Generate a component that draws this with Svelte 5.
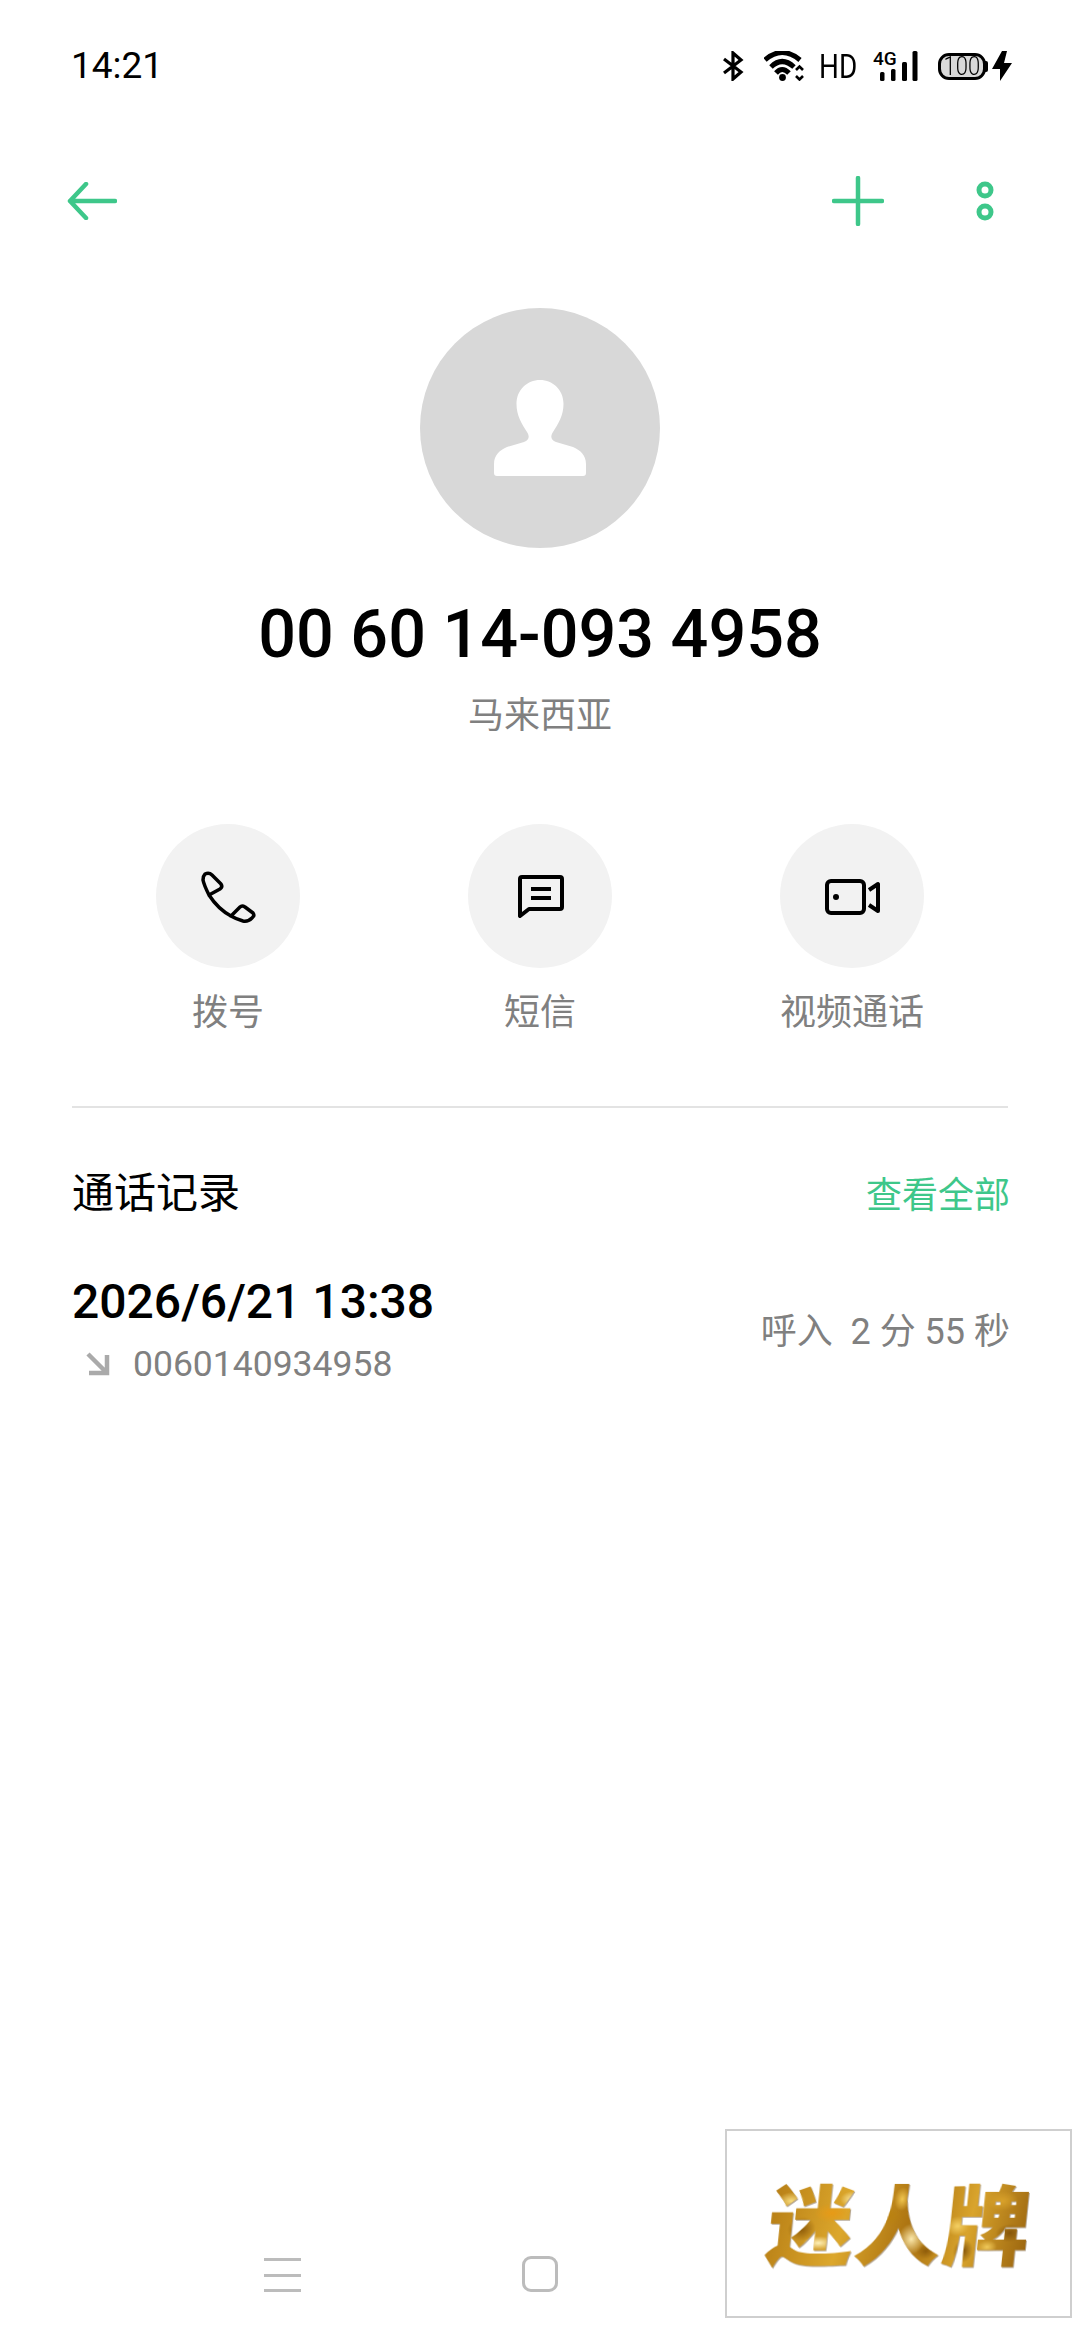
<script>
  const actions = [
    { label: '拨号', kind: 'phone' },
    { label: '短信', kind: 'msg' },
    { label: '视频通话', kind: 'video' }
  ];
</script>

<div class="page">
  <header class="status">
    <span class="time">14:21</span>
    <div class="status-icons">
      <svg class="bt" viewBox="0 0 24 30" width="24" height="30"><path d="M3 8 L20 21 L12 28 V2 L20 9 L3 22" /></svg>
      <svg class="wifi" viewBox="0 0 42 30" width="42" height="30">
        <path d="M1 9 Q18 -6 36 9" /><path d="M7 16 Q18 5 30 16" /><path d="M12 22 Q18 15 25 22" />
        <circle cx="18.5" cy="26.5" r="3.4" />
        <path class="thin" d="M32 19 L35.500 15.500 L39 19 M32 25 L35.500 28.500 L39 25" />
      </svg>
      <span class="hd">HD</span>
      <svg class="signal" viewBox="0 -6 46 36" width="46" height="36">
        <text x="0" y="14" class="g4">4G</text>
        <rect x="7" y="21" width="4.5" height="9" rx="1.5" />
        <rect x="18" y="18" width="4.5" height="12" rx="1.5" />
        <rect x="29" y="11" width="5" height="19" rx="1.5" />
        <rect x="39.500" y="0" width="5" height="30" rx="1.5" />
      </svg>
      <div class="battery"><span>100</span></div>
      <svg class="bolt" viewBox="0 0 20 30" width="20" height="30"><path d="M10 0 L0 18 H8 L8 30 L20 12 H12 L15 0 Z" /></svg>
    </div>
  </header>

  <nav class="toolbar">
    <svg viewBox="0 0 50 38" width="50" height="38"><path d="M3 19 H48 M19 2 L3 19 L19 36" /></svg>
    <div class="tools">
      <svg viewBox="0 0 52 50" width="52" height="50"><path d="M2 25 H50 M26 2 V48" /></svg>
      <svg viewBox="0 0 18 42" width="18" height="42">
        <circle cx="9" cy="10" r="6" /><circle cx="9" cy="32" r="6" />
      </svg>
    </div>
  </nav>

  <section class="hero">
    <div class="avatar">
      <svg viewBox="0 0 240 240" width="240" height="240">
        <path d="M120 72 C133 72 143.500 82 143.500 96 C143.500 108 138 116 133 124 C130 129 131 132 136 134 L153 139 C160 142 166 147 166 156 V165 Q166 168 163 168 H77 Q74 168 74 165 V156 C74 147 80 142 87 139 L104 134 C109 132 110 129 107 124 C102 116 96.500 108 96.500 96 C96.500 82 107 72 120 72 Z" />
      </svg>
    </div>
    <h1>00 60 14-093 4958</h1>
    <p>马来西亚</p>
  </section>

  <section class="actions">
    {#each actions as a}
      <div class="action">
        <div class="circle">
          {#if a.kind === 'phone'}
            <svg viewBox="0 0 80 70" width="80" height="70" class="phone">
              <path d="M15 13 Q19 11 22 14 L31 23 Q33 26 30 28 L19 34 Q14 24 13 19 Q13 15 15 13 Z" />
              <path d="M19 34 Q28 48 41 55" />
              <path d="M41 55 L50 46 Q52 44 55 46 L63 52 Q65 55 62 57 Q58 61 53 60 Q46 58 41 55 Z" />
            </svg>
          {:else if a.kind === 'msg'}
            <svg viewBox="0 0 70 70" width="70" height="70" class="bold msg">
              <path d="M14 55 V18 Q14 16 16 16 H54 Q56 16 56 18 V46 Q56 48 54 48 H23 Z" />
              <path d="M25 28 H45 M25 37 H45" />
            </svg>
          {:else}
            <svg viewBox="0 0 80 60" width="80" height="60" class="bold video">
              <rect x="13" y="15" width="37" height="32" rx="4" />
              <circle class="dot" cx="22" cy="31" r="3" />
              <path d="M55 24 L64 18 V45 L55 39" />
            </svg>
          {/if}
        </div>
        <span>{a.label}</span>
      </div>
    {/each}
  </section>

  <hr />

  <section class="log">
    <div class="log-head">
      <h2>通话记录</h2>
      <span class="all">查看全部</span>
    </div>
    <div class="log-row">
      <div class="log-main">
        <div class="date">2026/6/21 13:38</div>
        <div class="num">
          <svg viewBox="0 0 26 26" width="26" height="26"><path d="M3 3 L22 22 M22 4 V22 H4" /></svg>
          <span>0060140934958</span>
        </div>
      </div>
      <span class="dur">呼入&nbsp; 2 分 55 秒</span>
    </div>
  </section>

  <footer class="navbar">
    <div class="menu"><i></i><i></i><i></i></div>
    <div class="home"></div>
    <div></div>
  </footer>

  <div class="stamp"><span>迷人牌</span></div>
</div>

<style>
  :global(body) { margin: 0; background: #fff; }
  .page {
    position: relative;
    width: 1080px;
    height: 2340px;
    display: flex;
    flex-direction: column;
    overflow: hidden;
    background: #fff;
    font-family: Roboto, "Noto Sans CJK SC", sans-serif;
    color: #000;
  }
  .status {
    height: 130px;
    flex: none;
    box-sizing: border-box;
    padding: 2px 68px 0 71px;
    display: flex;
    align-items: center;
    justify-content: space-between;
  }
  .time { font-size: 37px; line-height: 44px; }
  .status-icons { display: flex; align-items: center; }
  .status-icons svg { display: block; }
  .bt path, .wifi path { fill: none; stroke: #000; stroke-width: 3.2px; }
  .bt { margin-right: -1px; }
  .wifi { margin-left: 20px; }
  .wifi path { stroke-width: 5px; }
  .wifi .thin { stroke-width: 2.600px; }
  .hd {
    display: block;
    width: 37px;
    margin-left: 13px;
    font-size: 34px;
    line-height: 30px;
    transform: scaleX(0.82);
    transform-origin: left center;
    white-space: nowrap;
  }
  .signal { margin: -6px 0 0 17px; }
  .g4 { font: 500 19px Roboto, sans-serif; }
  .battery {
    margin-left: 19px;
    box-sizing: border-box;
    width: 48px;
    height: 27px;
    border: 3px solid #000;
    border-radius: 11px;
    background: #d9d9d9;
    display: flex;
    align-items: center;
    justify-content: center;
    position: relative;
  }
  .battery::after {
    content: "";
    position: absolute;
    right: -5px;
    top: 5px;
    width: 3px;
    height: 11px;
    background: #000;
    border-radius: 0 2px 2px 0;
  }
  .battery span {
    font-size: 25px;
    font-weight: 300;
    line-height: 21px;
    transform: scaleX(0.88);
  }
  .bolt { margin-left: 6px; }

  .toolbar {
    flex: none;
    height: 142px;
    box-sizing: border-box;
    padding: 0 86px 0 67px;
    display: flex;
    align-items: center;
    justify-content: space-between;
  }
  .toolbar svg { display: block; }
  .toolbar path { fill: none; stroke: #3ec78a; stroke-width: 4.500px; stroke-linecap: round; stroke-linejoin: round; }
  .toolbar circle { fill: none; stroke: #3ec78a; stroke-width: 5px; }
  .tools { display: flex; align-items: center; gap: 92px; }

  .hero { flex: none; padding-top: 36px; display: flex; flex-direction: column; align-items: center; }
  .avatar { width: 240px; height: 240px; border-radius: 50%; background: #d8d8d8; }
  .avatar svg { display: block; }
  .avatar path { fill: #fff; }
  h1 { margin: 41px 0 0; font-size: 66.500px; line-height: 90px; font-weight: 500; letter-spacing: 0; }
  .hero p { margin: 12px 0 0; font-size: 36px; line-height: 50px; color: #808080; }

  .actions {
    flex: none;
    margin-top: 83px;
    display: grid;
    grid-template-columns: repeat(3, 312px);
    justify-content: center;
  }
  .action { display: flex; flex-direction: column; align-items: center; }
  .circle {
    width: 144px;
    height: 144px;
    border-radius: 50%;
    background: #f2f2f2;
    display: flex;
    align-items: center;
    justify-content: center;
  }
  .circle svg { display: block; }
  .circle .phone { margin-left: 3px; }
  .circle .msg { margin-left: 1px; }
  .circle .video { margin-left: 4px; }
  .circle path, .circle rect { fill: none; stroke: #000; stroke-width: 3.500px; stroke-linejoin: round; }
  .circle .bold path, .circle .bold rect { stroke-width: 4px; }
  .circle .dot { fill: #000; }
  .action span { margin-top: 20px; font-size: 36px; line-height: 50px; color: #808080; }

  hr { flex: none; width: 936px; height: 2px; margin: 68px auto 0; border: 0; background: #e3e3e3; }

  .log { flex: none; padding: 0 70px 0 72px; }
  .log-head { margin-top: 56px; display: flex; justify-content: space-between; align-items: center; height: 60px; }
  h2 { margin: 0; font-size: 42px; line-height: 60px; font-weight: 400; }
  .all { font-size: 36px; line-height: 50px; color: #3ec78a; margin-top: 3px; }
  .log-row { margin-top: 48px; display: flex; justify-content: space-between; align-items: center; }
  .date { font-size: 48px; line-height: 60px; font-weight: 500; }
  .num { margin-top: 10px; display: flex; align-items: center; gap: 22px; padding-left: 13px; font-size: 35.500px; line-height: 44px; color: #808080; }
  .num svg { display: block; flex: none; }
  .num path { fill: none; stroke: #aaa; stroke-width: 4.500px; }
  .dur { font-size: 36px; line-height: 50px; color: #808080; margin-top: 6px; }

  .navbar {
    margin-top: auto;
    height: 122px;
    box-sizing: border-box;
    padding: 0 153px 48px;
    flex: none;
    display: grid;
    grid-template-columns: repeat(3, 1fr);
    align-items: end;
    justify-items: center;
  }
  .menu { width: 37px; height: 34px; display: flex; flex-direction: column; justify-content: space-between; }
  .menu i { display: block; height: 3px; background: #bcbcbc; }
  .home { box-sizing: border-box; width: 36px; height: 36px; border: 3px solid #bcbcbc; border-radius: 9px; }

  .stamp {
    position: absolute;
    left: 725px;
    top: 2129px;
    box-sizing: border-box;
    width: 347px;
    height: 189px;
    padding: 0 0 6px 3px;
    border: 2px solid #cfcfcf;
    background: #fff;
    display: flex;
    align-items: center;
    justify-content: center;
  }
  .stamp span {
    font-family: "Noto Sans CJK SC", sans-serif;
    font-weight: 900;
    font-size: 87px;
    line-height: 100px;
    letter-spacing: 1px;
    white-space: nowrap;
    color: transparent;
    transform: skewX(-6deg);
    background:
      radial-gradient(ellipse 14px 9px at 8% 30%, #f7dc7e, transparent),
      radial-gradient(ellipse 16px 7px at 20% 72%, #fff0b8, transparent),
      radial-gradient(ellipse 18px 10px at 24% 42%, #e79a16, transparent),
      radial-gradient(ellipse 12px 8px at 31% 28%, #f9e6a0, transparent),
      radial-gradient(ellipse 14px 12px at 13% 58%, #8c5a0a, transparent),
      radial-gradient(ellipse 16px 10px at 45% 45%, #b9810f, transparent),
      radial-gradient(ellipse 14px 16px at 55% 68%, #fbe9ac, transparent),
      radial-gradient(ellipse 8px 12px at 50% 28%, #f1c650, transparent),
      radial-gradient(ellipse 10px 8px at 61% 80%, #8f5c0a, transparent),
      radial-gradient(ellipse 12px 10px at 72% 55%, #f4d064, transparent),
      radial-gradient(ellipse 10px 12px at 75% 80%, #7f5008, transparent),
      radial-gradient(ellipse 16px 10px at 88% 30%, #d8a12a, transparent),
      radial-gradient(ellipse 14px 9px at 92% 62%, #85550a, transparent),
      radial-gradient(ellipse 10px 7px at 84% 76%, #f0c95a, transparent),
      linear-gradient(100deg, #b57c14, #dca72c 30%, #a9700f 55%, #d9a42c 75%, #96600c);
    -webkit-background-clip: text;
    background-clip: text;
    filter: drop-shadow(1px 1px 0 rgba(90, 60, 20, 0.45));
  }
</style>
